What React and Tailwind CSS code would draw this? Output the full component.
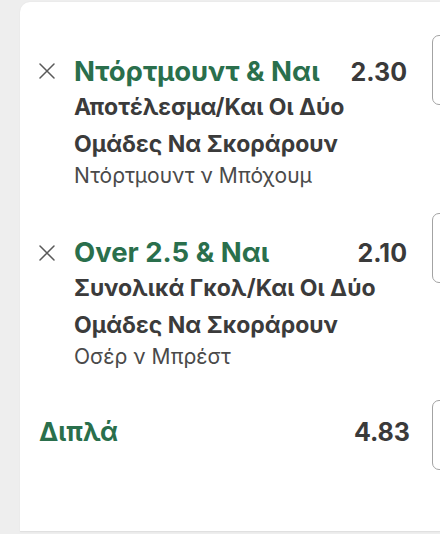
import React from "react";

function XIcon({ className }) {
  return (
    <svg className={className} width="16" height="16" viewBox="0 0 16 16" fill="none">
      <path d="M1 1L15 15M15 1L1 15" stroke="#5a5a5a" strokeWidth="1.5" strokeLinecap="round" />
    </svg>
  );
}

function Selection({ title, odds, lines, event, rowMt, textMt, iconMt }) {
  return (
    <div className={`flex items-start w-[452px] ${rowMt}`}>
      <div className="flex items-start w-[387px] shrink-0 pl-[19px]">
        <XIcon className={`shrink-0 ${iconMt}`} />
        <div className={`ml-[19px] flex-1 ${textMt}`}>
          <div className="flex justify-between items-baseline">
            <span className="text-[27.5px] leading-[34px] font-bold text-[#2a6f4c]">{title}</span>
            <span className="text-[25px] leading-[34px] font-bold text-[#3a3a3a]">{odds}</span>
          </div>
          {lines.map((l) => (
            <div key={l} className="text-[23px] leading-[37px] font-bold text-[#3b3b3b] whitespace-nowrap">
              {l}
            </div>
          ))}
          <div className="text-[21px] leading-[26px] text-[#4a4a4a] whitespace-nowrap">{event}</div>
        </div>
      </div>
      <div className="ml-[25px] w-[40px] h-[70px] shrink-0 border-[1.5px] border-[#a3a3a3] rounded-[7px]" />
    </div>
  );
}

export default function App() {
  return (
    <div className="w-[440px] h-[534px] bg-[#eeeeee] pl-[20px] pt-[2px] overflow-hidden font-[Inter,'Noto_Sans',sans-serif]">
      <div className="bg-white rounded-tl-[10px] h-[530px] border-b border-[#e0e0e0] overflow-hidden shadow-[0_0_2px_rgba(0,0,0,0.06)]">
        <Selection
          rowMt="mt-[33px]"
          textMt="mt-[19px]"
          iconMt="mt-[28px]"
          title="Ντόρτμουντ & Ναι"
          odds="2.30"
          lines={["Αποτέλεσμα/Και Οι Δύο", "Ομάδες Να Σκοράρουν"]}
          event="Ντόρτμουντ ν Μπόχουμ"
        />
        <Selection
          rowMt="mt-[24px]"
          textMt="mt-[22px]"
          iconMt="mt-[32px]"
          title="Over 2.5 & Ναι"
          odds="2.10"
          lines={["Συνολικά Γκολ/Και Οι Δύο", "Ομάδες Να Σκοράρουν"]}
          event="Οσέρ ν Μπρέστ"
        />
        <div className="flex items-start w-[452px] mt-[30px]">
          <div className="flex justify-between items-baseline w-[390px] shrink-0 pl-[19px] mt-[15px]">
            <span className="text-[26px] leading-[34px] font-bold text-[#2a6f4c]">Διπλά</span>
            <span className="text-[25px] leading-[34px] font-bold text-[#3a3a3a]">4.83</span>
          </div>
          <div className="ml-[22px] w-[40px] h-[70px] shrink-0 border-[1.5px] border-[#a3a3a3] rounded-[7px]" />
        </div>
      </div>
    </div>
  );
}
